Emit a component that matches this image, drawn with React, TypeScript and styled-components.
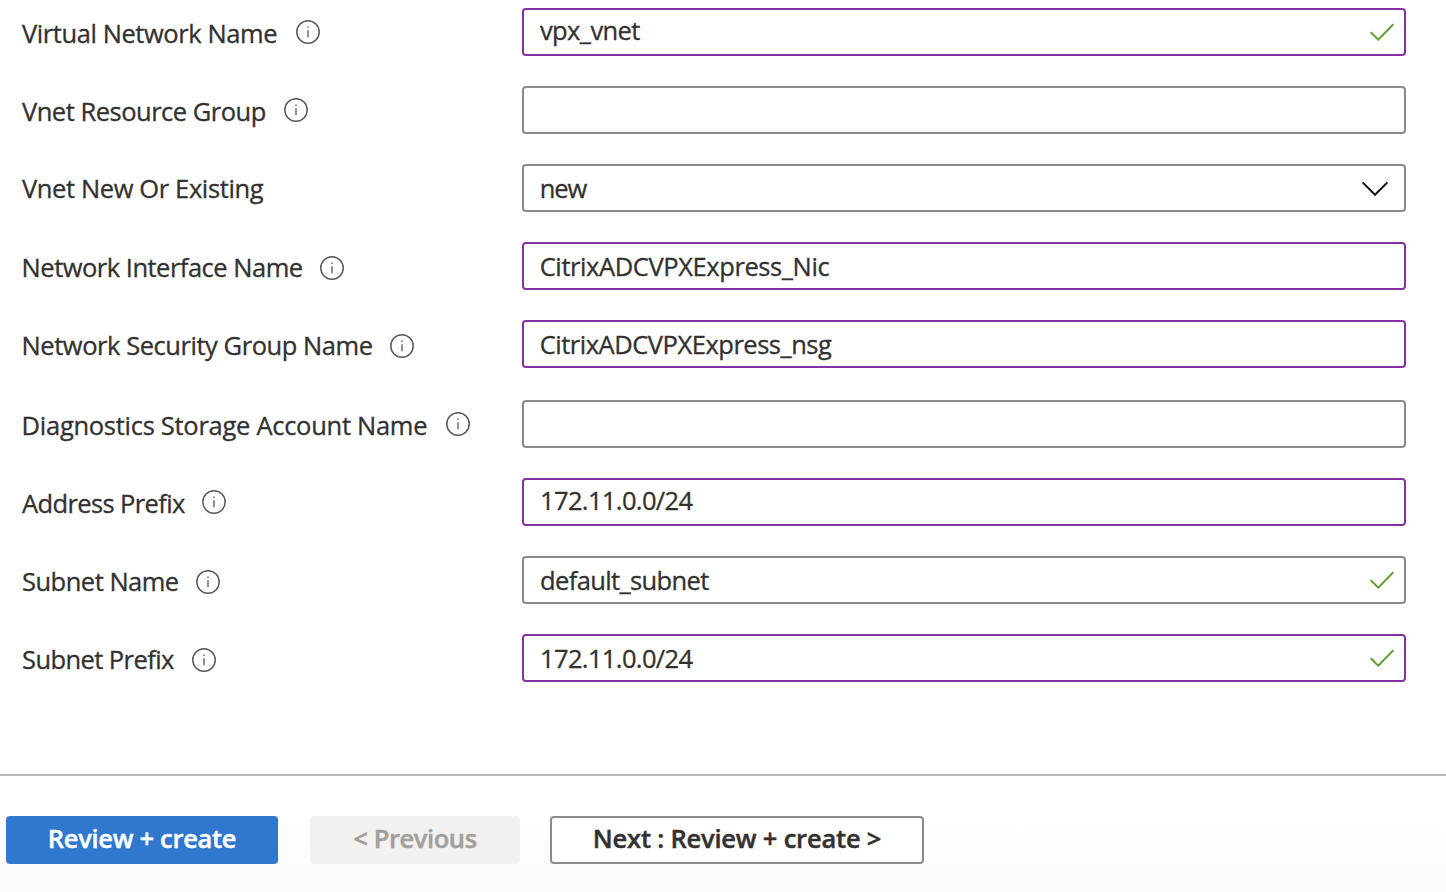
import React from 'react';
import styled, { createGlobalStyle } from 'styled-components';

const GlobalStyle = createGlobalStyle`
  *, *::before, *::after { box-sizing: border-box; }
  body {
    margin: 0;
    background: #fff;
    color: #323130;
    font-family: "Open Sans", "Noto Sans", sans-serif;
    font-size: 25.5px;
    -webkit-text-stroke: 0.3px currentColor;
    overflow: hidden;
  }
`;

const Page = styled.div`
  display: flex;
  flex-direction: column;
  height: 892px;
`;

const Form = styled.main`
  display: flex;
  flex-direction: column;
  gap: 30px;
  height: 774px;
  padding: 8px 40px 0 22px;
`;

const Row = styled.div<{ $extraTop?: number }>`
  display: grid;
  grid-template-columns: 500px 1fr;
  height: 48px;
  margin-top: ${(p) => p.$extraTop ?? 0}px;
`;

const LabelCell = styled.div`
  display: flex;
  align-items: flex-start;
  height: 48px;
`;

const Label = styled.label<{ $width: number; $spacing: number; $indent?: number; $drop: number }>`
  flex: none;
  width: ${(p) => p.$width}px;
  padding-top: ${(p) => p.$drop}px;
  text-indent: ${(p) => p.$indent ?? 0}px;
  line-height: 48px;
  letter-spacing: ${(p) => p.$spacing}px;
  white-space: nowrap;
`;

const InfoSvg = styled.svg<{ $top: number }>`
  flex: none;
  width: 24px;
  height: 24px;
  margin-top: ${(p) => p.$top}px;
`;

const Field = styled.div<{ $edited?: boolean; $select?: boolean }>`
  display: flex;
  align-items: center;
  justify-content: space-between;
  height: 48px;
  padding: 0 ${(p) => (p.$select ? 15 : 10)}px 0 16px;
  border: 2px solid ${(p) => (p.$edited ? '#8332a4' : '#8a8a8a')};
  border-radius: 4px;
  background: #fff;
`;

const Value = styled.span<{ $spacing: number; $indent?: number; $lift?: boolean }>`
  height: 44px;
  line-height: ${(p) => (p.$lift ? 40 : 44)}px;
  text-indent: ${(p) => p.$indent ?? 0}px;
  letter-spacing: ${(p) => p.$spacing}px;
  white-space: nowrap;
`;

const CheckSvg = styled.svg`
  flex: none;
  width: 24px;
  height: 18px;
`;

const ChevronSvg = styled.svg`
  flex: none;
  width: 28px;
  height: 16px;
  margin-top: 2px;
`;

const Footer = styled.footer`
  display: flex;
  align-items: flex-start;
  height: 118px;
  padding: 40px 6px 0;
  border-top: 2px solid #bababa;
  background: linear-gradient(#fff 30%, #fefefe 60%, #fafafa 100%);
`;

const Button = styled.button<{ $width: number; $gap?: number; $spacing: number }>`
  display: flex;
  align-items: center;
  justify-content: center;
  width: ${(p) => p.$width}px;
  height: 48px;
  margin: 0 ${(p) => p.$gap ?? 0}px 0 0;
  padding: 0 0 4px;
  border: 0;
  border-radius: 4px;
  font: 600 25.5px/40px "Open Sans", "Noto Sans", sans-serif;
  -webkit-text-stroke: 0.45px currentColor;
  letter-spacing: ${(p) => p.$spacing}px;
  white-space: nowrap;
`;

const PrimaryButton = styled(Button)`
  background: #2f78cd;
  color: #fff;
`;

const DisabledButton = styled(Button)`
  background: #f2f1f0;
  color: #a19f9d;
`;

const OutlineButton = styled(Button)`
  border: 2px solid #8a8a8a;
  background: #fff;
  color: #323130;
`;

const InfoIcon = ({ top }: { top: number }) => (
  <InfoSvg $top={top} viewBox="0 0 24 24" fill="none" stroke="#5a5959">
    <circle cx="12" cy="12" r="11.2" strokeWidth="1.5" />
    <path d="M12 10.2v7.1M12 6.5v1.6" strokeWidth="1.5" stroke="#6e6d6c" />
  </InfoSvg>
);

const CheckIcon = () => (
  <CheckSvg viewBox="0 0 24 18" fill="none" stroke="#5fa02c" strokeWidth="2">
    <path d="M.7 9.2 8.3 16.6 23.3 1.2" />
  </CheckSvg>
);

const ChevronIcon = () => (
  <ChevronSvg viewBox="0 0 28 16" fill="none" stroke="#111" strokeWidth="2">
    <path d="M1.6 1.4 14 13.8 26.4 1.4" />
  </ChevronSvg>
);

interface FieldRow {
  label: string;
  width: number;
  spacing: number;
  indent?: number;
  drop?: number;
  info?: number;
  value?: string;
  valueSpacing?: number;
  valueIndent?: number;
  lift?: boolean;
  edited?: boolean;
  valid?: boolean;
  select?: boolean;
  extraTop?: number;
}

const rows: FieldRow[] = [
  { label: 'Virtual Network Name', width: 274, spacing: -0.42, info: 12, value: 'vpx_vnet', valueSpacing: -0.62, lift: true, edited: true, valid: true },
  { label: 'Vnet Resource Group', width: 262, spacing: -0.49, info: 12 },
  { label: 'Vnet New Or Existing', width: 262, spacing: -0.38, drop: 0, value: 'new', valueSpacing: -1.1, valueIndent: -0.3, select: true },
  { label: 'Network Interface Name', width: 298, spacing: -0.5, indent: -0.4, info: 14, value: 'CitrixADCVPXExpress_Nic', valueSpacing: -0.41, valueIndent: -0.3, edited: true },
  { label: 'Network Security Group Name', width: 368, spacing: -0.45, indent: -0.4, info: 14, value: 'CitrixADCVPXExpress_nsg', valueSpacing: -0.48, valueIndent: -0.3, edited: true },
  { label: 'Diagnostics Storage Account Name', width: 424, spacing: -0.28, indent: -0.4, info: 12, extraTop: 2 },
  { label: 'Address Prefix', width: 180, spacing: -0.62, info: 12, value: '172.11.0.0/24', valueSpacing: -0.63, lift: true, edited: true },
  { label: 'Subnet Name', width: 174, spacing: -0.5, info: 14, value: 'default_subnet', valueSpacing: -0.62, valueIndent: 0, valid: true },
  { label: 'Subnet Prefix', width: 170, spacing: -0.58, info: 14, value: '172.11.0.0/24', valueSpacing: -0.63, edited: true, valid: true },
];

export default function App() {
  return (
    <Page>
      <GlobalStyle />
      <Form>
        {rows.map((r) => (
          <Row key={r.label} $extraTop={r.extraTop}>
            <LabelCell>
              <Label $width={r.width} $spacing={r.spacing} $indent={r.indent} $drop={r.drop ?? 1}>
                {r.label}
              </Label>
              {r.info !== undefined && <InfoIcon top={r.info} />}
            </LabelCell>
            <Field $edited={r.edited} $select={r.select}>
              <Value $spacing={r.valueSpacing ?? 0} $indent={r.valueIndent} $lift={r.lift}>
                {r.value}
              </Value>
              {r.valid && <CheckIcon />}
              {r.select && <ChevronIcon />}
            </Field>
          </Row>
        ))}
      </Form>
      <Footer>
        <PrimaryButton $width={272} $gap={32} $spacing={-0.3}>Review + create</PrimaryButton>
        <DisabledButton $width={210} $gap={30} $spacing={-0.42} disabled>&lt; Previous</DisabledButton>
        <OutlineButton $width={374} $spacing={-0.2}>Next : Review + create &gt;</OutlineButton>
      </Footer>
    </Page>
  );
}
